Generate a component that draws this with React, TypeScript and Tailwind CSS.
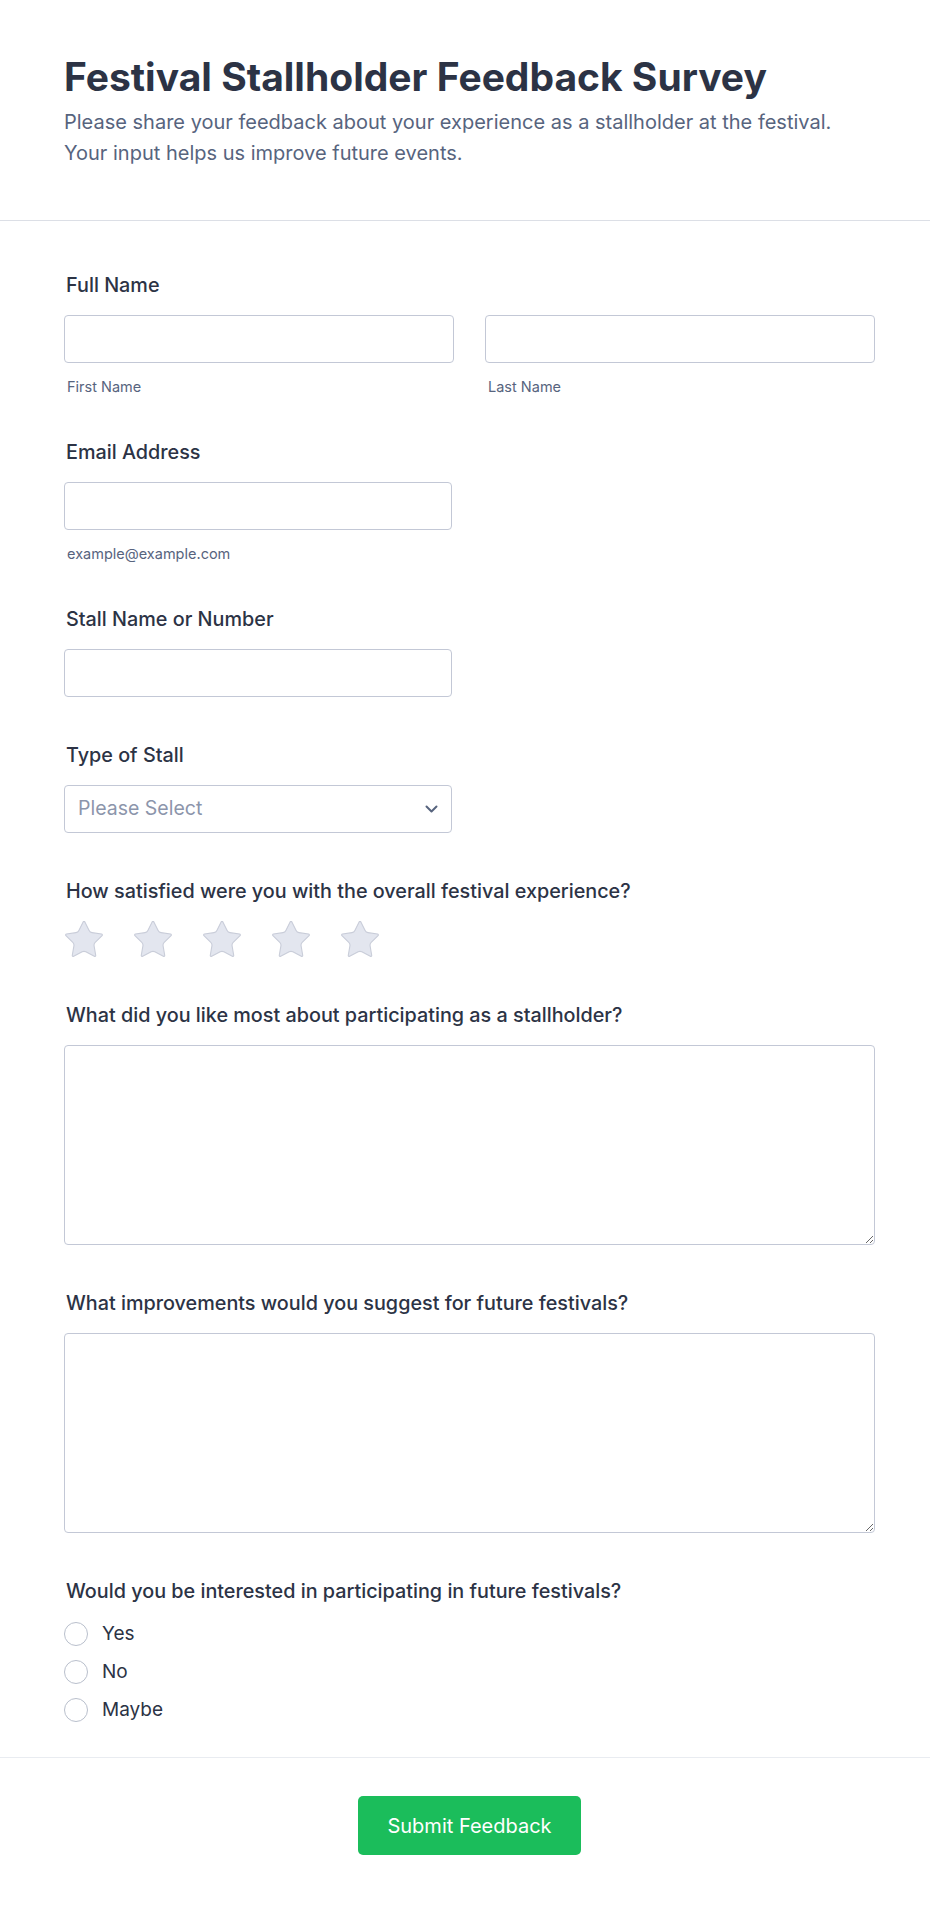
import React from "react";

const FONT = { fontFamily: "Inter, 'Noto Sans', sans-serif" };

function Label({ children }: { children: React.ReactNode }) {
  return (
    <label className="block text-[19.8px] leading-[28px] font-medium text-[#2c3345] mb-[16px] pl-[2px]">
      {children}
    </label>
  );
}

function SubLabel({ children }: { children: React.ReactNode }) {
  return <span className="block mt-[16px] pl-[3px] text-[14.5px] leading-[15px] text-[#57647e]">{children}</span>;
}

const inputCls =
  "block h-[48px] w-full rounded-[4px] border border-[#c3c8d6] bg-white px-[14px] text-[19.5px] text-[#2c3345] outline-none";

function Star() {
  return (
    <svg width="38" height="36" viewBox="1.9 1.8 20.2 19.6" className="shrink-0">
      <path
        d="M11.525 2.295a.53.53 0 0 1 .95 0l2.31 4.679a2.123 2.123 0 0 0 1.595 1.16l5.166.756a.53.53 0 0 1 .294.904l-3.736 3.638a2.123 2.123 0 0 0-.611 1.878l.882 5.14a.53.53 0 0 1-.771.56l-4.618-2.428a2.122 2.122 0 0 0-1.973 0L6.396 21.01a.53.53 0 0 1-.77-.56l.881-5.139a2.122 2.122 0 0 0-.611-1.879L2.16 9.795a.53.53 0 0 1 .294-.906l5.165-.755a2.122 2.122 0 0 0 1.597-1.16z"
        fill="#e3e6ef"
        stroke="#c9cdd9"
        strokeWidth="0.6"
        strokeLinejoin="round"
      />
    </svg>
  );
}

export default function App() {
  return (
    <div className="min-h-[1906px] bg-white" style={FONT}>
      {/* header */}
      <div className="pl-[64px] pr-[55px] pt-[54px] pb-[51px] border-b border-[#dcdfe6]">
        <h1 className="text-[39px] leading-[46px] font-bold text-[#2c3345]">
          Festival Stallholder Feedback Survey
        </h1>
        <p className="mt-[7px] text-[20px] leading-[31px] text-[#57647e]">
          Please share your feedback about your experience as a stallholder at the festival.
          <br />
          Your input helps us improve future events.
        </p>
      </div>

      {/* form body */}
      <form className="pl-[64px] pr-[55px] pt-[50px] pb-[28px] flex flex-col gap-[44px]">
        <div>
          <Label>Full Name</Label>
          <div className="grid grid-cols-2 gap-[31px]">
            <div>
              <input className={inputCls} />
              <SubLabel>First Name</SubLabel>
            </div>
            <div>
              <input className={inputCls} />
              <SubLabel>Last Name</SubLabel>
            </div>
          </div>
        </div>

        <div>
          <Label>Email Address</Label>
          <div className="w-[388px]">
            <input className={inputCls} />
            <SubLabel>example@example.com</SubLabel>
          </div>
        </div>

        <div>
          <Label>Stall Name or Number</Label>
          <div className="w-[388px]">
            <input className={inputCls} />
          </div>
        </div>

        <div>
          <Label>Type of Stall</Label>
          <div className="w-[388px] h-[48px] rounded-[4px] border border-[#c3c8d6] flex items-center justify-between pl-[13px] pr-[13px]">
            <span className="text-[19.5px] text-[#8c95ab]">Please Select</span>
            <svg width="13" height="8" viewBox="0 0 13 8" fill="none">
              <path d="M1.5 1.5l5 5 5-5" stroke="#57647e" strokeWidth="2" strokeLinecap="round" strokeLinejoin="round" />
            </svg>
          </div>
        </div>

        <div>
          <Label>How satisfied were you with the overall festival experience?</Label>
          <div className="flex items-center gap-[31px] pl-[1px]">
            <Star />
            <Star />
            <Star />
            <Star />
            <Star />
          </div>
        </div>

        <div>
          <Label>What did you like most about participating as a stallholder?</Label>
          <textarea className="block w-full h-[200px] rounded-[4px] border border-[#c3c8d6] px-[14px] py-[10px] text-[19.5px] outline-none" />
        </div>

        <div>
          <Label>What improvements would you suggest for future festivals?</Label>
          <textarea className="block w-full h-[200px] rounded-[4px] border border-[#c3c8d6] px-[14px] py-[10px] text-[19.5px] outline-none" />
        </div>

        <div>
          <label className="block text-[19.8px] leading-[28px] font-medium text-[#2c3345] mb-[10px] pl-[2px]">
            Would you be interested in participating in future festivals?
          </label>
          <div className="flex flex-col">
            {["Yes", "No", "Maybe"].map((opt) => (
              <label key={opt} className="flex items-center h-[38px] gap-[14px]">
                <span className="w-[24px] h-[24px] rounded-full border-[1.5px] border-[#b9bfcc] bg-white shrink-0" />
                <span className="text-[19px] text-[#2c3345]">{opt}</span>
              </label>
            ))}
          </div>
        </div>
      </form>

      {/* footer */}
      <div className="pl-[64px] pr-[55px] pt-[38px] pb-[50px] border-t border-[#e9ecf1] flex justify-center">
        <button className="w-[223px] h-[59px] rounded-[5px] bg-[#1bbd5b] text-white text-[20px] font-normal">
          Submit Feedback
        </button>
      </div>
    </div>
  );
}
